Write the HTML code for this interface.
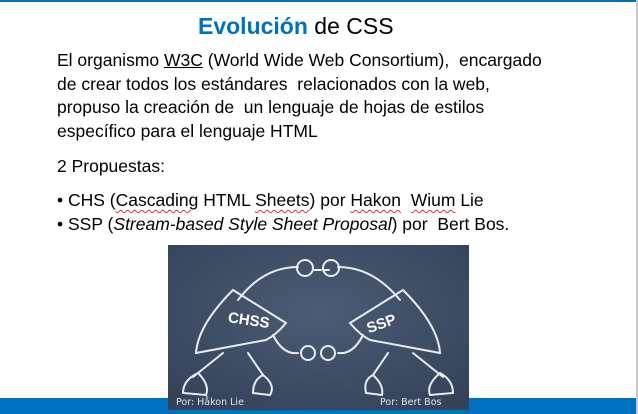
<!DOCTYPE html>
<html><head><meta charset="utf-8"><style>
body{margin:0;width:638px;height:414px;background:#fff;position:relative;overflow:hidden;font-family:"Liberation Sans",Arial,sans-serif;color:#000}
.t{position:absolute;white-space:nowrap}
.sq{text-decoration:underline wavy #e03030;text-decoration-thickness:1px;text-underline-offset:3px}
</style></head><body>
<div style="position:absolute;left:0;top:0;width:638px;height:2px;background:#0070c0"></div>
<div style="position:absolute;right:0;top:0;width:2px;height:414px;background:#c8c8c8"></div>
<div class="t" style="left:198px;top:13px;font-size:23px;"><b style="color:#0070c0">Evolución</b> de CSS</div>
<div class="t" style="left:57px;top:49px;font-size:17.5px;line-height:23.5px">El organismo <u>W3C</u> (World Wide Web Consortium),&nbsp; encargado<br>de crear todos los estándares&nbsp; relacionados con la web,<br>propuso la creación de&nbsp; un lenguaje de hojas de estilos<br>específico para el lenguaje HTML</div>
<div class="t" style="left:57px;top:156px;font-size:17.5px">2 Propuestas:</div>
<div class="t" style="left:57px;top:188px;font-size:17.5px;line-height:24px">• CHS (<span class="sq">Cascading</span> HTML <span class="sq">Sheets</span>) por <span class="sq">Hakon</span>&nbsp; <span class="sq">Wium</span> Lie<br>• SSP (<i>Stream-based Style Sheet Proposal</i>) por&nbsp; Bert Bos.</div>
<svg style="position:absolute;left:168px;top:245px" width="301" height="166" viewBox="0 0 301 166">
<defs><radialGradient id="g" cx="0.5" cy="0.4" r="0.7"><stop offset="0" stop-color="#4a5c74"/><stop offset="1" stop-color="#34435a"/></radialGradient></defs>
<rect width="301" height="166" fill="url(#g)"/>
<g fill="none" stroke="#e8ecf0" stroke-width="2" stroke-linecap="round">
<path d="M70 55 Q95 22 130 22 M170 22 Q205 22 232 55"/>
<ellipse cx="137" cy="23" rx="8" ry="8"/><ellipse cx="163" cy="23" rx="8" ry="8"/>
<path d="M145 25 h8 M155 25 h6"/>
<path d="M65 45 L118 78 Q108 90 98 95 L28 108 Q30 80 65 45Z"/>
<path d="M235 45 L182 78 Q192 90 202 95 L272 108 Q270 80 235 45Z"/>
<path d="M105 90 Q115 110 130 108 M195 90 Q185 110 170 108"/>
<ellipse cx="140" cy="108" rx="7" ry="7"/><ellipse cx="160" cy="108" rx="7" ry="7"/>
<path d="M55 108 L25 132 M80 108 L95 130 M220 108 L205 130 M245 108 L275 132"/>
<path d="M15 148 Q15 135 30 128 Q42 140 38 150Z M85 148 Q85 135 95 130 Q108 140 102 150Z M198 148 Q195 135 205 130 Q216 140 214 150Z M285 148 Q285 135 272 128 Q258 140 262 150Z"/>
</g>
<g fill="#fff" font-family="Liberation Sans,sans-serif" font-weight="bold" font-size="15">
<text x="60" y="80" transform="rotate(8 80 75)">CHSS</text>
<text x="198" y="84" transform="rotate(-20 212 78)">SSP</text>
</g>
<g fill="#dfe4ea" font-family="DejaVu Sans,sans-serif" font-size="9.5">
<text x="8" y="160">Por: Håkon Lie</text>
<text x="212" y="160">Por: Bert Bos</text>
</g>
</svg>
<div style="position:absolute;left:0;top:398px;width:168px;height:16px;background:#0070c0"></div>
<div style="position:absolute;left:469px;top:398px;width:167px;height:16px;background:#0070c0"></div>
<div style="position:absolute;left:168px;top:410px;width:301px;height:4px;background:#0070c0"></div>
</body></html>
